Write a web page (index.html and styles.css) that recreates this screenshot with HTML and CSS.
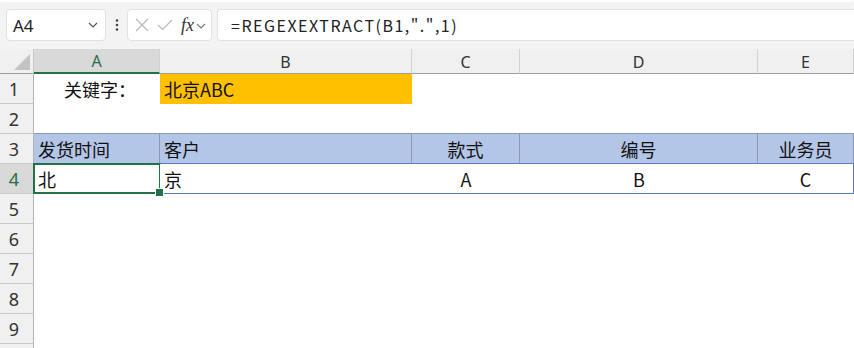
FILE: index.html
```html
<!DOCTYPE html>
<html lang="zh">
<head>
<meta charset="utf-8">
<title>Sheet</title>
<link rel="stylesheet" href="styles.css">
</head>
<body>
<div class="app">
  <div class="ribbon-edge"></div>
  <div class="formula-bar">
    <div class="namebox">
      <span class="ref">A4</span>
      <svg class="chev" width="10" height="6" viewBox="0 0 10 6"><path d="M1 1 L5 5 L9 1" fill="none" stroke="#555" stroke-width="1.2"/></svg>
    </div>
    <div class="dots">
      <svg width="4" height="12" viewBox="0 0 4 12"><circle cx="2" cy="1.5" r="1.3" fill="#444"/><circle cx="2" cy="6" r="1.3" fill="#444"/><circle cx="2" cy="10.5" r="1.3" fill="#444"/></svg>
    </div>
    <div class="fx-tools">
      <svg class="ic-x" width="14" height="14" viewBox="0 0 14 14"><path d="M1 1 L13 13 M13 1 L1 13" stroke="#b8b8b8" stroke-width="1.2" fill="none"/></svg>
      <svg class="ic-ok" width="16" height="12" viewBox="0 0 16 12"><path d="M1 6 L5.5 10.5 L15 1" stroke="#b8b8b8" stroke-width="1.2" fill="none"/></svg>
      <span class="fx">fx</span>
      <svg class="chev2" width="10" height="6" viewBox="0 0 10 6"><path d="M1 1 L5 5 L9 1" fill="none" stroke="#777" stroke-width="1.1"/></svg>
    </div>
    <div class="formula">=REGEXEXTRACT(B1,".",1)</div>
  </div>
  <div class="sheet">
    <div class="corner"><span class="tri"></span></div>
    <div class="ch sel-col">A</div>
    <div class="ch">B</div>
    <div class="ch">C</div>
    <div class="ch">D</div>
    <div class="ch">E</div>

    <div class="rh">1</div>
    <div class="c center kw">关键字：</div>
    <div class="c key">北京ABC</div>
    <div class="c"></div>
    <div class="c"></div>
    <div class="c"></div>

    <div class="rh">2</div>
    <div class="c tline"></div>
    <div class="c tline"></div>
    <div class="c tline"></div>
    <div class="c tline"></div>
    <div class="c tline"></div>

    <div class="rh">3</div>
    <div class="c th">发货时间</div>
    <div class="c th">客户</div>
    <div class="c th center">款式</div>
    <div class="c th center">编号</div>
    <div class="c th center last">业务员</div>

    <div class="rh sel-row">4</div>
    <div class="c td active">北</div>
    <div class="c td">京</div>
    <div class="c td center">A</div>
    <div class="c td center">B</div>
    <div class="c td center last">C</div>

    <div class="rh">5</div><div class="c"></div><div class="c"></div><div class="c"></div><div class="c"></div><div class="c"></div>
    <div class="rh">6</div><div class="c"></div><div class="c"></div><div class="c"></div><div class="c"></div><div class="c"></div>
    <div class="rh">7</div><div class="c"></div><div class="c"></div><div class="c"></div><div class="c"></div><div class="c"></div>
    <div class="rh">8</div><div class="c"></div><div class="c"></div><div class="c"></div><div class="c"></div><div class="c"></div>
    <div class="rh">9</div><div class="c"></div><div class="c"></div><div class="c"></div><div class="c"></div><div class="c"></div>
    <div class="rh"></div><div class="c"></div><div class="c"></div><div class="c"></div><div class="c"></div><div class="c"></div>
  </div>
</div>
</body>
</html>
```

FILE: styles.css
```css
* { box-sizing: border-box; }
html, body { margin: 0; padding: 0; }
body {
  width: 854px;
  height: 348px;
  overflow: hidden;
  background: #ffffff;
  font-family: "Noto Sans CJK SC", "Noto Sans", sans-serif;
  color: #222;
}
.app { width: 854px; height: 348px; overflow: hidden; }

.ribbon-edge {
  height: 3px;
  background: #ffffff;
  border-bottom: 1px solid #dcdcdc;
  border-radius: 0 0 4px 4px;
  margin: 0 2px;
}
.formula-bar {
  height: 47px;
  background: #f3f3f3;
  display: flex;
  align-items: flex-start;
  padding: 7px 0 0 6px;
  margin-top: -1px;
}
.namebox {
  width: 100px;
  height: 32px;
  background: #fff;
  border: 1px solid #e1e1e1;
  border-radius: 4px;
  display: flex;
  align-items: center;
  justify-content: space-between;
  padding: 0 7px 0 6px;
}
.ref { font-family: "Noto Sans", sans-serif; font-size: 17px; color: #222; line-height: 1; }
.dots {
  width: 21px;
  height: 32px;
  display: flex;
  align-items: center;
  justify-content: center;
}
.fx-tools {
  width: 85px;
  height: 32px;
  background: #fff;
  border: 1px solid #e1e1e1;
  border-radius: 4px;
  display: flex;
  align-items: center;
  padding: 0 0 0 7px;
}
.ic-x { margin-right: 8px; }
.ic-ok { margin-right: 8px; }
.fx {
  font-family: "Liberation Serif", "DejaVu Serif", serif;
  font-style: italic;
  font-size: 18px;
  color: #333;
  margin-right: 2px;
  line-height: 1;
}
.chev2 { margin-top: 1px; }
.formula {
  flex: 1;
  margin-left: 5px;
  height: 32px;
  background: #fff;
  border: 1px solid #e1e1e1;
  border-right: none;
  border-radius: 4px 0 0 4px;
  display: flex;
  align-items: center;
  padding-left: 13px;
  font-size: 16px;
  color: #222;
  letter-spacing: 1.5px;
}

.sheet {
  display: grid;
  grid-template-columns: 34px 126px 252px 108px 238px 96px;
  grid-template-rows: 25px repeat(10, 30px);
}
.corner {
  background: #f0f0f0;
  border-right: 1px solid #c8c8c8;
  border-bottom: 1px solid #9e9e9e;
  position: relative;
}
.tri {
  position: absolute;
  right: 3px;
  bottom: 3px;
  width: 0;
  height: 0;
  border-left: 16px solid transparent;
  border-bottom: 16px solid #c3c3c3;
}
.ch {
  background: #f0f0f0;
  border-right: 1px solid #d2d2d2;
  border-bottom: 1px solid #9e9e9e;
  display: flex;
  align-items: flex-end;
  justify-content: center;
  font-family: "Noto Sans", sans-serif;
  font-size: 16px;
  line-height: 1;
  padding-bottom: 3px;
  color: #333;
}
.ch.sel-col {
  background: #d9d9d9;
  color: #217346;
  border-bottom: 2px solid #217346;
}
.rh {
  background: #f0f0f0;
  border-right: 1px solid #b4b4b4;
  border-bottom: 1px solid #c9c9c9;
  display: flex;
  align-items: center;
  justify-content: center;
  padding-right: 5px;
  font-family: "Noto Sans", sans-serif;
  font-size: 18px;
  color: #333;
}
.rh.sel-row {
  background: #d9d9d9;
  color: #217346;
}
.c {
  display: flex;
  align-items: center;
  padding: 0 4px;
  font-size: 18px;
  color: #111;
  white-space: nowrap;
  position: relative;
}
.c.center { justify-content: center; }
.c.kw { padding-left: 10px; }
.c.key { background: #ffc000; }
.c.tline { border-bottom: 1px solid #8c99b3; }
.c.th {
  background: #b4c6e7;
  border-right: 1px solid #8c99b3;
  border-bottom: 1px solid #5a7bbd;
}
.c.td {
  background: #fff;
  border-bottom: 1px solid #5a7bbd;
}
.c.td.last { border-right: 1px solid #5a7bbd; }
.c.active::after {
  content: "";
  position: absolute;
  left: -1px;
  top: -1px;
  right: -1px;
  bottom: -1px;
  border: 2px solid #217346;
}
.c.active::before {
  content: "";
  position: absolute;
  right: -4px;
  bottom: -4px;
  width: 7px;
  height: 7px;
  background: #217346;
  border: 1px solid #fff;
  z-index: 2;
}
```
